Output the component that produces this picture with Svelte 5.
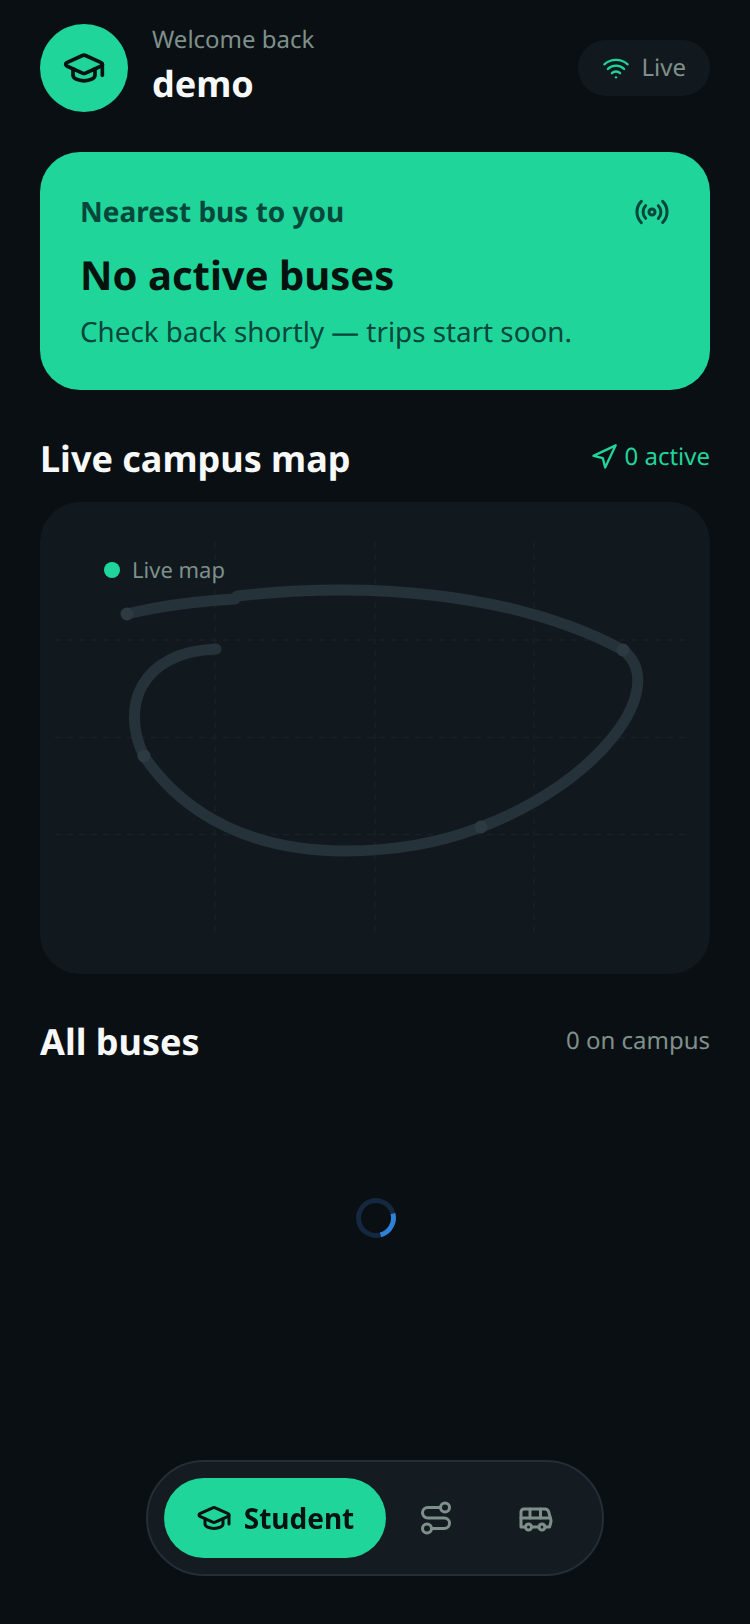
<script lang="ts">
	const gridX = [175, 335, 494];
	const gridY = [138, 235.5, 332.5];
	const stops = [
		[87, 112],
		[583, 148],
		[441, 325],
		[104, 254]
	];
</script>

<div class="page">
	<header class="top">
		<div class="avatar">
			<svg width="44" height="44" viewBox="0 0 24 24" fill="none" stroke="currentColor" stroke-width="2" stroke-linecap="round" stroke-linejoin="round">
				<path d="M21.42 10.922a1 1 0 0 0-.019-1.838L12.83 5.18a2 2 0 0 0-1.66 0L2.6 9.08a1 1 0 0 0 0 1.832l8.57 3.908a2 2 0 0 0 1.66 0z"/>
				<path d="M22 10v6"/>
				<path d="M6 12.5V16a6 3 0 0 0 12 0v-3.5"/>
			</svg>
		</div>
		<div class="hello">
			<div class="welcome">Welcome back</div>
			<div class="name">demo</div>
		</div>
		<div class="live">
			<svg width="28" height="28" viewBox="0 0 24 24" fill="none" stroke="currentColor" stroke-width="2" stroke-linecap="round" stroke-linejoin="round">
				<path d="M12 20h.01"/>
				<path d="M2 8.82a15 15 0 0 1 20 0"/>
				<path d="M5 12.859a10 10 0 0 1 14 0"/>
				<path d="M8.5 16.429a5 5 0 0 1 7 0"/>
			</svg>
			<span>Live</span>
		</div>
	</header>

	<section class="nearest">
		<div class="nearest-top">
			<span class="nearest-label">Nearest bus to you</span>
			<svg width="36" height="36" viewBox="0 0 24 24" fill="none" stroke="currentColor" stroke-width="2" stroke-linecap="round" stroke-linejoin="round">
				<path d="M4.9 19.1C1 15.2 1 8.8 4.9 4.9"/>
				<path d="M7.8 16.2c-2.3-2.3-2.3-6.1 0-8.5"/>
				<circle cx="12" cy="12" r="2"/>
				<path d="M16.2 7.8c2.3 2.3 2.3 6.1 0 8.5"/>
				<path d="M19.1 4.9C23 8.8 23 15.1 19.1 19"/>
			</svg>
		</div>
		<h2 class="nearest-title">No active buses</h2>
		<p class="nearest-sub">Check back shortly — trips start soon.</p>
	</section>

	<div class="section-head map-head">
		<h3>Live campus map</h3>
		<div class="active">
			<svg width="28" height="28" viewBox="0 0 24 24" fill="none" stroke="currentColor" stroke-width="2" stroke-linecap="round" stroke-linejoin="round">
				<polygon points="3 11 22 2 13 21 11 13 3 11"/>
			</svg>
			<span>0 active</span>
		</div>
	</div>

	<div class="map">
		<svg class="map-art" viewBox="0 0 670 472" width="670" height="472" fill="none">
			{#each gridX as x}
				<line class="grid" x1={x} y1="40" x2={x} y2="432" />
			{/each}
			{#each gridY as y}
				<line class="grid" x1="15" y1={y} x2="650" y2={y} />
			{/each}
			<g class="route">
				<path d="M87 112C120 104 160 99 195 97" />
				<path d="M197 94C320 80 470 88 583 148" />
				<path d="M583 148C630 185 560 280 441 325" />
				<path d="M441 325C395 343 350 349 304 349C215 349 145 315 104 254" />
				<path d="M104 254C80 205 100 150 176 147" />
			</g>
			{#each stops as [cx, cy]}
				<circle class="stop" {cx} {cy} r="6.5" />
			{/each}
		</svg>
		<div class="legend">
			<i></i>
			<span>Live map</span>
		</div>
	</div>

	<div class="section-head buses-head">
		<h3>All buses</h3>
		<span class="count">0 on campus</span>
	</div>

	<div class="loading">
		<div class="spinner"></div>
	</div>
</div>

<nav class="tabs">
	<button class="tab on">
		<svg width="36" height="36" viewBox="0 0 24 24" fill="none" stroke="currentColor" stroke-width="2" stroke-linecap="round" stroke-linejoin="round">
			<path d="M21.42 10.922a1 1 0 0 0-.019-1.838L12.83 5.18a2 2 0 0 0-1.66 0L2.6 9.08a1 1 0 0 0 0 1.832l8.57 3.908a2 2 0 0 0 1.66 0z"/>
			<path d="M22 10v6"/>
			<path d="M6 12.5V16a6 3 0 0 0 12 0v-3.5"/>
		</svg>
		<span>Student</span>
	</button>
	<button class="tab" aria-label="Routes">
		<svg width="36" height="36" viewBox="0 0 24 24" fill="none" stroke="currentColor" stroke-width="2" stroke-linecap="round" stroke-linejoin="round">
			<circle cx="6" cy="19" r="3"/>
			<path d="M9 19h8.5a3.5 3.5 0 0 0 0-7h-11a3.5 3.5 0 0 1 0-7H15"/>
			<circle cx="18" cy="5" r="3"/>
		</svg>
	</button>
	<button class="tab" aria-label="Driver">
		<svg width="36" height="36" viewBox="0 0 24 24" fill="none" stroke="currentColor" stroke-width="2" stroke-linecap="round" stroke-linejoin="round">
			<path d="M8 6v6"/>
			<path d="M15 6v6"/>
			<path d="M2 12h19.6"/>
			<path d="M18 18h3s.5-1.7.8-2.8c.1-.4.2-.8.2-1.2 0-.4-.1-.8-.2-1.2l-1.4-5C20.1 6.8 19.1 6 18 6H4a2 2 0 0 0-2 2v10h3"/>
			<circle cx="7" cy="18" r="2"/>
			<path d="M9 18h5"/>
			<circle cx="16" cy="18" r="2"/>
		</svg>
	</button>
</nav>

<style>
	:global(body) {
		margin: 0;
		background: #0a0f13;
		font-family: "Noto Sans", sans-serif;
		text-rendering: geometricPrecision;
		color: #f3f6f5;
	}

	.page {
		position: relative;
		box-sizing: border-box;
		height: 1624px;
		padding: 24px 40px 0;
		overflow: hidden;
	}

	.top {
		display: flex;
		align-items: center;
		gap: 24px;
	}

	.avatar {
		width: 88px;
		height: 88px;
		border-radius: 50%;
		background: #20d59a;
		color: #06120e;
		display: flex;
		align-items: center;
		justify-content: center;
		flex: none;
	}

	.hello {
		flex: 1;
		margin-bottom: 6px;
	}

	.welcome {
		font-size: 24px;
		line-height: 32px;
		color: #7f908b;
	}

	.name {
		margin-top: 6px;
		font-size: 36px;
		line-height: 44px;
		font-weight: 700;
		color: #f7f9f9;
	}

	.live {
		box-sizing: border-box;
		height: 56px;
		padding: 0 24px;
		display: flex;
		align-items: center;
		gap: 12px;
		border-radius: 28px;
		background: #12191e;
		color: #20d59a;
	}

	.live span {
		font-size: 24px;
		line-height: 32px;
		color: #7f908b;
	}

	.nearest {
		margin-top: 40px;
		box-sizing: border-box;
		height: 238px;
		padding: 42px 40px 0;
		border-radius: 40px;
		background: #20d59a;
		color: #06120e;
	}

	.nearest-top {
		display: flex;
		justify-content: space-between;
		align-items: center;
		height: 36px;
		color: #07463a;
	}

	.nearest-label {
		font-size: 28px;
		font-weight: 700;
	}

	.nearest-title {
		margin: 17px 0 0;
		font-size: 40px;
		line-height: 56px;
		font-weight: 700;
		color: #06120e;
	}

	.nearest-sub {
		margin: 9px 0 0;
		font-size: 27.8px;
		line-height: 40px;
		color: #07463a;
	}

	.section-head {
		display: flex;
		justify-content: space-between;
		align-items: center;
	}

	.section-head h3 {
		margin: 0;
		font-size: 36px;
		line-height: 48px;
		font-weight: 700;
		color: #f7f9f9;
	}

	.map-head {
		margin-top: 45px;
	}

	.active {
		display: flex;
		align-items: center;
		gap: 6px;
		color: #20d59a;
		font-size: 24px;
		line-height: 32px;
		margin-bottom: 5px;
	}

	.map {
		position: relative;
		margin-top: 19px;
		height: 472px;
		border-radius: 40px;
		background: #12191e;
		overflow: hidden;
	}

	.map-art {
		position: absolute;
		inset: 0;
	}

	.grid {
		stroke: #182127;
		stroke-width: 1.5;
		stroke-dasharray: 6 6;
	}

	.route path {
		stroke: #263239;
		stroke-width: 11;
		stroke-linecap: round;
	}

	.stop {
		fill: #2d3a41;
	}

	.legend {
		position: absolute;
		left: 64px;
		top: 53px;
		display: flex;
		align-items: center;
		gap: 12px;
		font-size: 22px;
		line-height: 30px;
		color: #7f908b;
	}

	.legend i {
		width: 16px;
		height: 16px;
		border-radius: 50%;
		background: #20d59a;
	}

	.buses-head {
		margin-top: 44px;
	}

	.count {
		font-size: 24px;
		line-height: 32px;
		color: #7f908b;
		margin-bottom: 2px;
	}

	.loading {
		display: flex;
		justify-content: center;
		margin-top: 132px;
		padding-left: 1px;
	}

	.spinner {
		box-sizing: border-box;
		width: 40px;
		height: 40px;
		border-radius: 50%;
		border: 5px solid #14293f;
		border-right-color: #2f80d8;
		transform: rotate(30deg);
	}

	.tabs {
		position: fixed;
		left: 146px;
		top: 1460px;
		box-sizing: border-box;
		width: 458px;
		height: 116px;
		padding: 16px;
		display: flex;
		border: 2px solid #242e35;
		border-radius: 58px;
		background: #141c22;
	}

	.tab {
		width: 100px;
		height: 80px;
		display: flex;
		align-items: center;
		justify-content: center;
		gap: 12px;
		border: 0;
		border-radius: 40px;
		background: transparent;
		color: #7f908b;
		font: inherit;
		padding: 0;
	}

	.tab.on {
		width: 222px;
		background: #20d59a;
		color: #06120e;
	}

	.tab span {
		font-size: 28px;
		font-weight: 700;
	}
</style>
